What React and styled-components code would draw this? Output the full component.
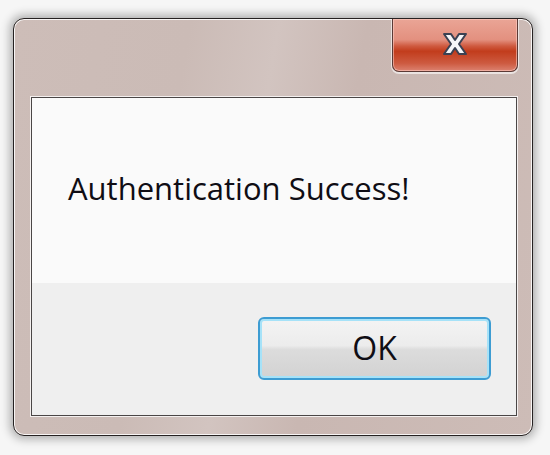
import React from "react";
import styled, { createGlobalStyle } from "styled-components";

const GlobalStyle = createGlobalStyle`
  html, body {
    margin: 0;
    padding: 0;
    background: #f6f6f6;
  }
  body {
    width: 550px;
    height: 455px;
    overflow: hidden;
    font-family: "Open Sans", "Noto Sans", "Liberation Sans", sans-serif;
  }
`;

const Page = styled.div`
  width: 550px;
  height: 455px;
  padding: 18px 0 0 13px;
  box-sizing: border-box;
`;

const Window = styled.div`
  width: 520px;
  height: 418px;
  box-sizing: border-box;
  border: 1px solid #262222;
  border-radius: 11px;
  background: linear-gradient(
    100deg,
    #cdbdb8 0%,
    #cbbbb6 30%,
    #d2c4c0 45%,
    #c9b7b2 60%,
    #cdbcb7 100%
  );
  box-shadow: 0 0 10px 3px rgba(0, 0, 0, 0.3),
    inset 0 0 0 1px rgba(255, 255, 255, 0.85);
  padding: 0 15px 19px 17px;
  display: flex;
  flex-direction: column;
`;

const TitleBar = styled.div`
  height: 78px;
  display: flex;
  justify-content: flex-end;
  align-items: flex-start;
  flex-shrink: 0;
`;

const CloseButton = styled.div`
  width: 126px;
  height: 53px;
  margin-right: -1px;
  box-sizing: border-box;
  border: 1px solid #5b3a36;
  border-top: none;
  border-radius: 0 0 7px 7px;
  background: linear-gradient(
    180deg,
    #eaa596 0%,
    #e3907f 40%,
    #cf5a40 52%,
    #c23c1c 62%,
    #cd5a40 85%,
    #dc8270 100%
  );
  box-shadow: inset 0 0 0 1px rgba(255, 210, 200, 0.55),
    0 1px 0 1px rgba(255, 255, 255, 0.6);
  display: flex;
  align-items: center;
  justify-content: center;
  padding-bottom: 2px;
`;

const Client = styled.div`
  flex: 1;
  display: flex;
  flex-direction: column;
  border: 1px solid #4a4646;
  box-shadow: 0 0 0 1px #f4f0ef;
  background: #fafafa;
`;

const Message = styled.div`
  height: 185px;
  flex-shrink: 0;
  padding: 70px 0 0 36px;
  box-sizing: border-box;
  font-size: 31px;
  line-height: 40px;
  color: #0f0d14;
`;

const Footer = styled.div`
  flex: 1;
  background: #efefef;
  display: flex;
  justify-content: flex-end;
  align-items: flex-start;
  padding: 34px 25px 0 0;
`;

const OkButton = styled.button`
  width: 233px;
  height: 63px;
  box-sizing: border-box;
  border: 2px solid #3d9cd2;
  border-radius: 6px;
  background: linear-gradient(
    180deg,
    #f4f4f4 0%,
    #ececec 45%,
    #dcdcdc 52%,
    #d2d2d2 100%
  );
  box-shadow: inset 0 0 0 2px #a6e2f8;
  font-family: "Open Sans", "Noto Sans", "Liberation Sans", sans-serif;
  font-size: 32px;
  color: #0f0d14;
  padding: 0 0 3px;
  cursor: pointer;
`;

const CloseGlyph = () => (
  <svg width="28" height="24" viewBox="0 0 28 24">
    <path
      d="M3 2 H10 L14 8 L18 2 H25 L18 12 L25 22 H18 L14 16 L10 22 H3 L10 12 Z"
      fill="#f6f6f8"
      stroke="#3b4152"
      strokeWidth="2"
      strokeLinejoin="round"
    />
  </svg>
);

const App = () => {
  return (
    <>
      <GlobalStyle />
      <Page>
        <Window>
          <TitleBar>
            <CloseButton>
              <CloseGlyph />
            </CloseButton>
          </TitleBar>
          <Client>
            <Message>Authentication Success!</Message>
            <Footer>
              <OkButton>OK</OkButton>
            </Footer>
          </Client>
        </Window>
      </Page>
    </>
  );
};

export default App;
